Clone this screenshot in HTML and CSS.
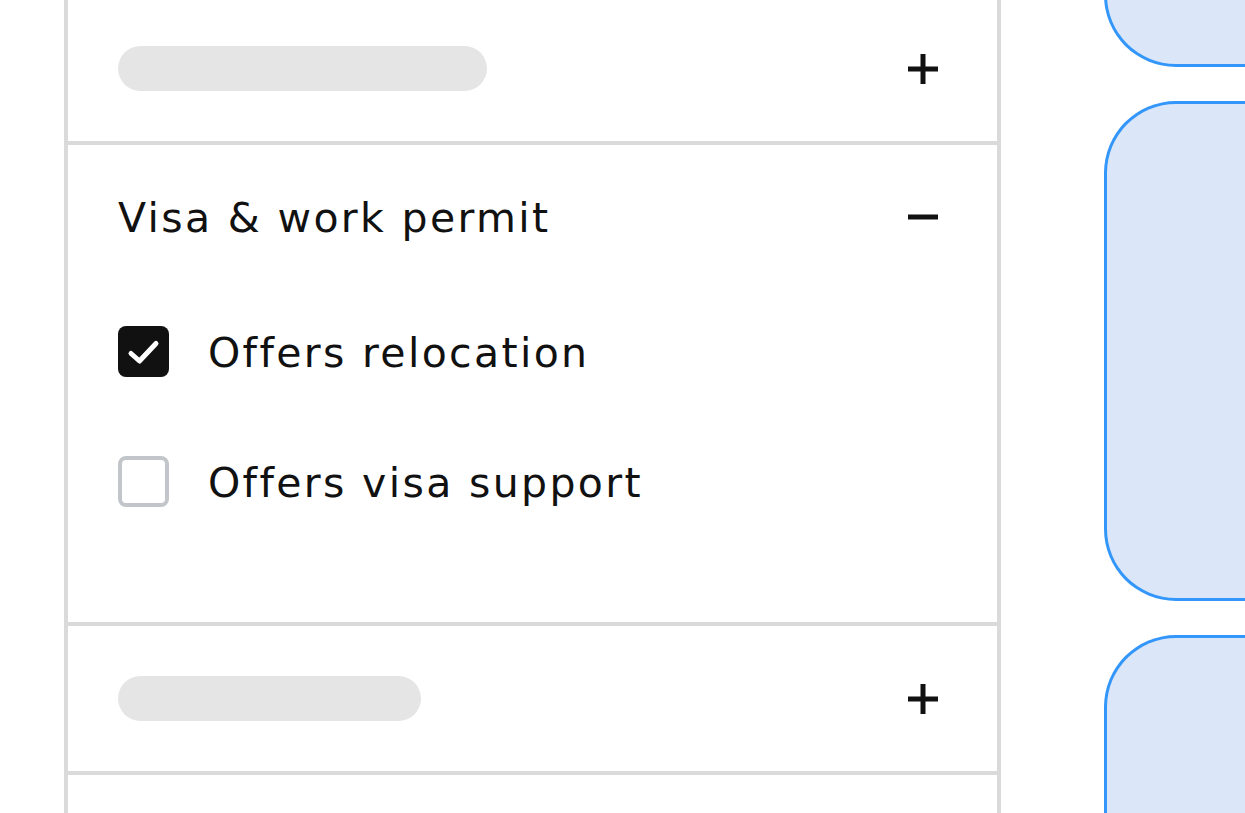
FILE: index.html
```html
<!DOCTYPE html>
<html>
<head>
<meta charset="utf-8">
<link rel="stylesheet" href="styles.css">
</head>
<body>
<div class="page">
  <div class="panel">
    <div class="section collapsed">
      <div class="placeholder wide"></div>
      <svg class="icon" viewBox="0 0 34 34"><path d="M17 2V32M2 17H32" stroke="#111" stroke-width="5" fill="none"/></svg>
    </div>
    <div class="divider"></div>
    <div class="section expanded">
      <div class="head">
        <span class="title">Visa &amp; work permit</span>
        <svg class="icon" viewBox="0 0 34 34"><path d="M2 17H32" stroke="#111" stroke-width="5" fill="none"/></svg>
      </div>
      <div class="options">
        <label class="option">
          <span class="box checked"><svg viewBox="0 0 51 51"><path d="M13 27.5L21.5 35L38 17.5" stroke="#fff" stroke-width="5" fill="none" stroke-linecap="round" stroke-linejoin="round"/></svg></span>
          <span class="label">Offers relocation</span>
        </label>
        <label class="option">
          <span class="box"></span>
          <span class="label">Offers visa support</span>
        </label>
      </div>
    </div>
    <div class="divider"></div>
    <div class="section collapsed">
      <div class="placeholder narrow"></div>
      <svg class="icon" viewBox="0 0 34 34"><path d="M17 2V32M2 17H32" stroke="#111" stroke-width="5" fill="none"/></svg>
    </div>
    <div class="divider"></div>
    <div class="section collapsed"></div>
  </div>
  <div class="cards">
    <div class="card c1"></div>
    <div class="card c2"></div>
    <div class="card c3"></div>
  </div>
</div>
</body>
</html>
```
FILE: styles.css
```css
html, body {
  margin: 0;
  padding: 0;
  background: #fff;
  overflow: hidden;
}
body {
  width: 1245px;
  height: 813px;
  font-family: "DejaVu Sans", "Noto Sans", sans-serif;
  color: #111;
}
.page {
  display: flex;
  align-items: flex-start;
  padding-left: 64px;
  gap: 103px;
}
.panel {
  width: 929px;
  flex: none;
  border-left: 4px solid #dadada;
  border-right: 4px solid #dadada;
  margin-top: -4px;
  display: flex;
  flex-direction: column;
}
.divider {
  height: 4px;
  background: #dadada;
}
.section.collapsed {
  height: 145px;
  display: flex;
  align-items: center;
  justify-content: space-between;
  padding: 0 57px 0 50px;
}
.placeholder {
  height: 45px;
  border-radius: 23px;
  background: #e5e5e5;
}
.placeholder.wide { width: 369px; }
.placeholder.narrow { width: 303px; }
.icon {
  width: 34px;
  height: 34px;
  flex: none;
}
.section.expanded {
  height: 477px;
  box-sizing: border-box;
  padding: 0 57px 0 50px;
}
.head {
  height: 146px;
  display: flex;
  align-items: center;
  justify-content: space-between;
}
.head .icon {
  margin-top: -3px;
}
.title {
  font-size: 41px;
  font-weight: 400;
  letter-spacing: 2.35px;
}
.options {
  display: flex;
  flex-direction: column;
  gap: 79px;
  margin-top: 35px;
}
.option {
  display: flex;
  align-items: center;
  gap: 39px;
  height: 51px;
}
.box {
  width: 51px;
  height: 51px;
  box-sizing: border-box;
  border-radius: 8px;
  border: 4px solid #c2c5ca;
  flex: none;
  display: block;
}
.box.checked {
  background: #111;
  border: none;
}
.box svg {
  width: 51px;
  height: 51px;
  display: block;
}
.label {
  font-size: 41px;
  letter-spacing: 2.35px;
  margin-top: 2px;
}
.cards {
  flex: none;
  width: 200px;
  display: flex;
  flex-direction: column;
  gap: 34px;
  margin-top: -133px;
}
.card {
  box-sizing: border-box;
  background: #dbe7f8;
  border: 3px solid #3396fa;
  border-right: none;
  border-radius: 72px 0 0 72px;
}
.c1 { height: 200px; }
.c2 { height: 500px; }
.c3 { height: 400px; }
```
